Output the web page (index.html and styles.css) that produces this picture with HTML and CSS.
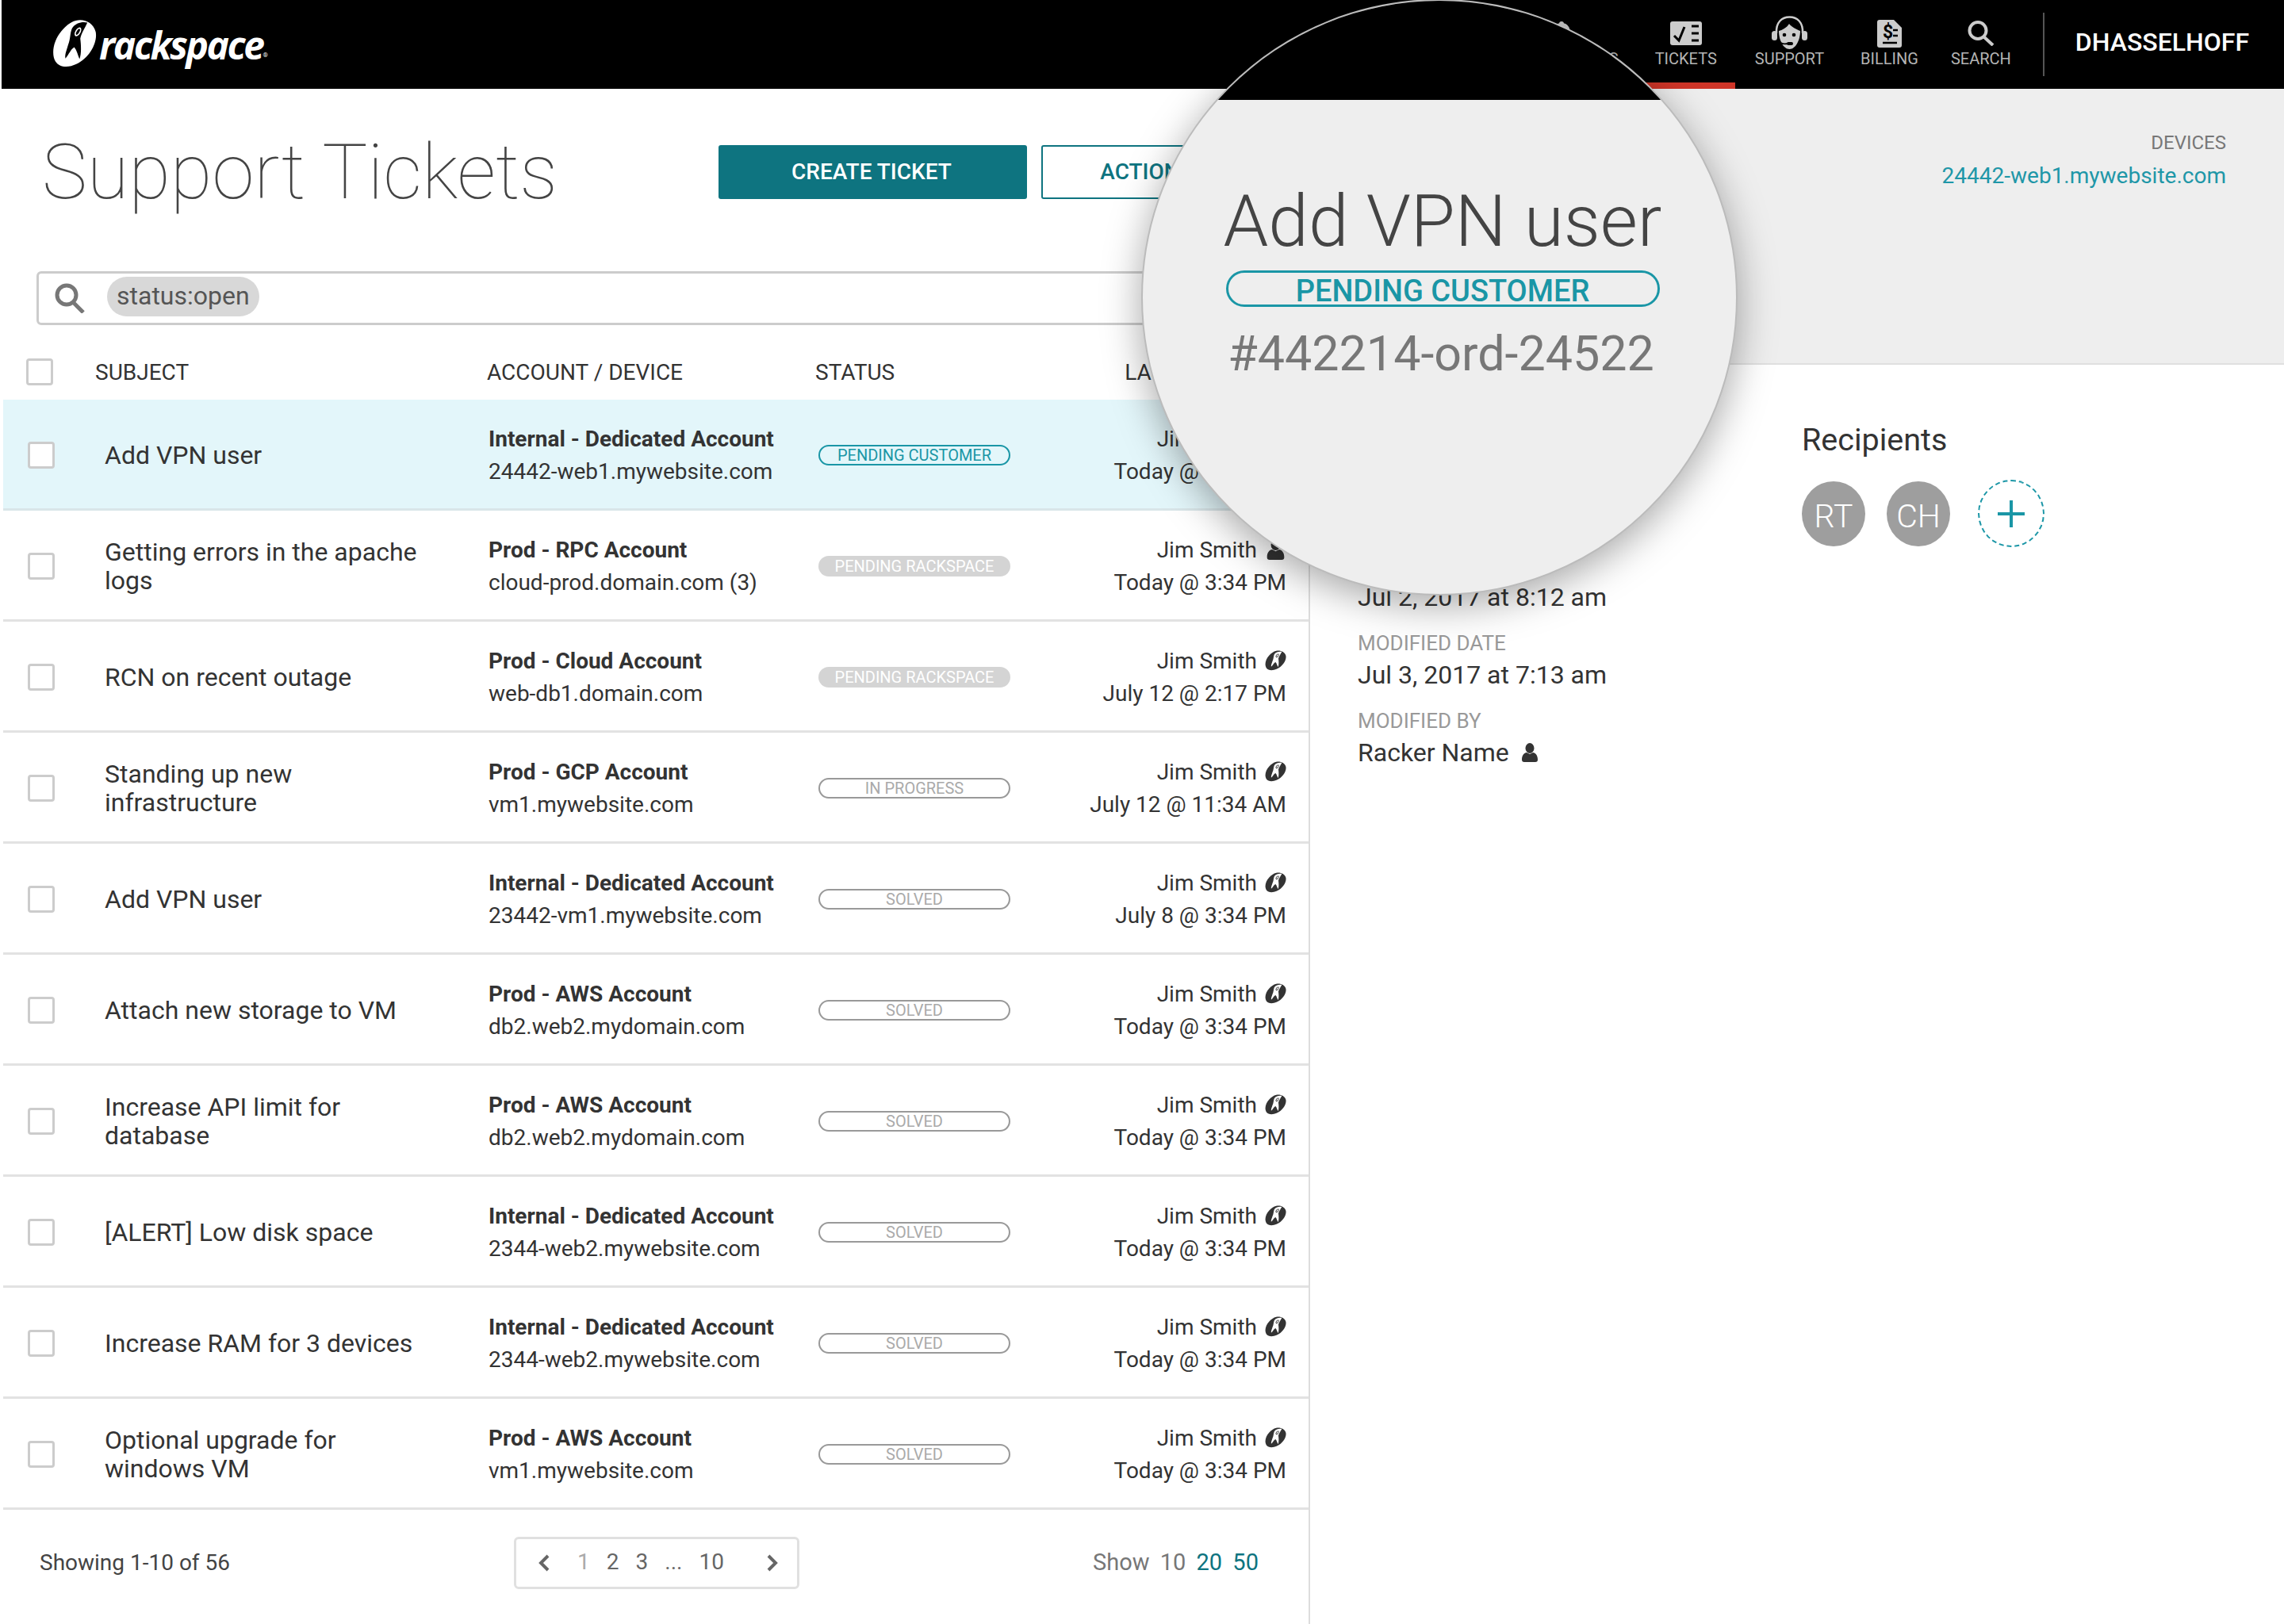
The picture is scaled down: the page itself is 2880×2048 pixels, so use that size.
FILE: index.html
```html
<!DOCTYPE html>
<html lang="en">

<head>
    <meta charset="UTF-8">
    <title>Support Tickets</title>
    <link rel="stylesheet" href="styles.css">
</head>

<body>
    <svg class="sprite" width="0" height="0">
        <symbol id="rack" viewBox="48 38 170 192" preserveAspectRatio="none">
            <path d="M138 44 C170 36 205 52 214 88 C222 130 190 190 140 214 C112 228 76 230 60 204 C42 172 54 120 82 86 C98 66 116 50 138 44Z" />
            <path class="cut" d="M182 52 C165 47 136 52 123 75 C115 95 118 115 108 140 C103 160 95 175 98 192 C112 176 118 156 132 148 C142 160 145 178 152 194 C160 175 158 140 155 115 C158 95 172 75 182 52Z" />
            <ellipse cx="146" cy="88" rx="10" ry="19" transform="rotate(30 146 88)" />
            <ellipse class="cut" cx="146" cy="88" rx="5" ry="13" transform="rotate(30 146 88)" />
        </symbol>
        <symbol id="person" viewBox="0 0 20 24">
            <ellipse cx="10" cy="6.5" rx="5.5" ry="6.5" />
            <path d="M0 21 C0 15 3 12.5 6 12 L10 14 L14 12 C17 12.5 20 15 20 21 C20 23 19 24 17 24 L3 24 C1 24 0 23 0 21Z" />
        </symbol>
    </svg>

    <header class="topbar">
        <a class="logo">
            <svg class="logo-mark" width="56" height="62"><use href="#rack" /></svg>
            <span class="logo-text">rackspace</span><span class="logo-reg">®</span>
        </a>
        <nav class="nav">
            <a class="nav-item">
                <div class="nav-icon">
                    <svg width="34" height="36" viewBox="0 0 34 36"><circle cx="17" cy="6" r="3" /><path d="M17 5 C25 5 28 11 28 18 L28 26 L32 30 L2 30 L6 26 L6 18 C6 11 9 5 17 5Z" /></svg>
                </div>
                <span>NOTIFICATIONS</span>
            </a>
            <a class="nav-item is-active">
                <div class="nav-icon">
                    <svg width="40" height="30" viewBox="0 0 40 30">
                        <rect width="40" height="30" rx="3" fill="#ccc" />
                        <path d="M5 18 L11 24 L18 7" fill="none" stroke="#000" stroke-width="3" />
                        <path d="M27 6 H36 M27 15 H36 M27 24 H36" stroke="#000" stroke-width="3" />
                    </svg>
                </div>
                <span>TICKETS</span>
            </a>
            <a class="nav-item">
                <div class="nav-icon">
                    <svg width="45" height="44" viewBox="0 0 45 44">
                        <path d="M6 22 C5 8 13 1.500 22.500 1.500 C32 1.500 40 8 39 22" fill="none" stroke="#ccc" stroke-width="2.500" />
                        <rect x="0" y="19" width="7" height="12" rx="3.500" fill="#ccc" />
                        <rect x="38" y="19" width="7" height="12" rx="3.500" fill="#ccc" />
                        <path d="M9 19 C13 18 19 15 22 10 C25 14 31 17 36 19 C36 31 30 42 22.500 42 C15 42 9 31 9 19Z" fill="#ccc" />
                        <circle cx="16" cy="24" r="2.300" fill="#000" />
                        <circle cx="28" cy="24" r="2.300" fill="#000" />
                        <path d="M9 31 C11 35 15 36 20 35" fill="none" stroke="#000" stroke-width="1.800" />
                        <rect x="19" y="33" width="8" height="4" rx="2" fill="#000" />
                    </svg>
                </div>
                <span>SUPPORT</span>
            </a>
            <a class="nav-item">
                <div class="nav-icon">
                    <svg width="31" height="35" viewBox="0 0 31 35">
                        <path d="M3 0 H21 L31 10 V32 C31 34 30 35 28 35 H3 C1 35 0 34 0 32 V3 C0 1 1 0 3 0Z" fill="#ccc" />
                        <text x="7" y="23" class="bill-sign">$</text>
                        <path d="M20 13 H26 M20 20 H26 M7 29 H25" stroke="#000" stroke-width="2.500" />
                    </svg>
                </div>
                <span>BILLING</span>
            </a>
            <a class="nav-item nav-search">
                <div class="nav-icon">
                    <svg width="34" height="32" viewBox="0 0 34 32">
                        <circle cx="13" cy="12.500" r="10.500" fill="none" stroke="#ccc" stroke-width="4" />
                        <path d="M20 20 L32 31" stroke="#ccc" stroke-width="4" />
                    </svg>
                </div>
                <span>SEARCH</span>
            </a>
        </nav>
        <div class="user">DHASSELHOFF</div>
    </header>

    <main class="page">
        <section class="tickets">
            <div class="title-row">
                <h1 class="title">Support Tickets</h1>
                <button class="btn btn-primary">CREATE TICKET</button>
                <button class="btn btn-outline">ACTIONS</button>
            </div>

            <div class="search">
                <svg width="38" height="38" viewBox="0 0 38 38">
                    <circle cx="15" cy="15" r="12" fill="none" stroke="#777" stroke-width="5" />
                    <path d="M23 24 L36 37" stroke="#777" stroke-width="5" />
                </svg>
                <span class="chip">status:open</span>
            </div>

            <div class="thead">
                <span class="check"></span>
                <span>SUBJECT</span>
                <span>ACCOUNT / DEVICE</span>
                <span>STATUS</span>
                <span class="thead-last">LAST UPDATED</span>
            </div>

            <div class="row is-selected">
                <span class="check"></span>
                <div class="subject">Add VPN user</div>
                <div class="account"><b>Internal - Dedicated Account</b><span>24442-web1.mywebsite.com</span></div>
                <div><span class="badge badge-customer">PENDING CUSTOMER</span></div>
                <div class="updated">
                    <div class="who">Jim Smith <svg class="who-icon"><use href="#rack" /></svg></div>
                    <div>Today @ 3:34 PM</div>
                </div>
            </div>
            <div class="row">
                <span class="check"></span>
                <div class="subject">Getting errors in the apache logs</div>
                <div class="account"><b>Prod - RPC Account</b><span>cloud-prod.domain.com (3)</span></div>
                <div><span class="badge badge-rackspace">PENDING RACKSPACE</span></div>
                <div class="updated">
                    <div class="who">Jim Smith <svg class="who-icon"><use href="#person" /></svg></div>
                    <div>Today @ 3:34 PM</div>
                </div>
            </div>
            <div class="row">
                <span class="check"></span>
                <div class="subject">RCN on recent outage</div>
                <div class="account"><b>Prod - Cloud Account</b><span>web-db1.domain.com</span></div>
                <div><span class="badge badge-rackspace">PENDING RACKSPACE</span></div>
                <div class="updated">
                    <div class="who">Jim Smith <svg class="who-icon"><use href="#rack" /></svg></div>
                    <div>July 12 @ 2:17 PM</div>
                </div>
            </div>
            <div class="row">
                <span class="check"></span>
                <div class="subject">Standing up new infrastructure</div>
                <div class="account"><b>Prod - GCP Account</b><span>vm1.mywebsite.com</span></div>
                <div><span class="badge">IN PROGRESS</span></div>
                <div class="updated">
                    <div class="who">Jim Smith <svg class="who-icon"><use href="#rack" /></svg></div>
                    <div>July 12 @ 11:34 AM</div>
                </div>
            </div>
            <div class="row">
                <span class="check"></span>
                <div class="subject">Add VPN user</div>
                <div class="account"><b>Internal - Dedicated Account</b><span>23442-vm1.mywebsite.com</span></div>
                <div><span class="badge">SOLVED</span></div>
                <div class="updated">
                    <div class="who">Jim Smith <svg class="who-icon"><use href="#rack" /></svg></div>
                    <div>July 8 @ 3:34 PM</div>
                </div>
            </div>
            <div class="row">
                <span class="check"></span>
                <div class="subject">Attach new storage to VM</div>
                <div class="account"><b>Prod - AWS Account</b><span>db2.web2.mydomain.com</span></div>
                <div><span class="badge">SOLVED</span></div>
                <div class="updated">
                    <div class="who">Jim Smith <svg class="who-icon"><use href="#rack" /></svg></div>
                    <div>Today @ 3:34 PM</div>
                </div>
            </div>
            <div class="row">
                <span class="check"></span>
                <div class="subject">Increase API limit for database</div>
                <div class="account"><b>Prod - AWS Account</b><span>db2.web2.mydomain.com</span></div>
                <div><span class="badge">SOLVED</span></div>
                <div class="updated">
                    <div class="who">Jim Smith <svg class="who-icon"><use href="#rack" /></svg></div>
                    <div>Today @ 3:34 PM</div>
                </div>
            </div>
            <div class="row">
                <span class="check"></span>
                <div class="subject">[ALERT] Low disk space</div>
                <div class="account"><b>Internal - Dedicated Account</b><span>2344-web2.mywebsite.com</span></div>
                <div><span class="badge">SOLVED</span></div>
                <div class="updated">
                    <div class="who">Jim Smith <svg class="who-icon"><use href="#rack" /></svg></div>
                    <div>Today @ 3:34 PM</div>
                </div>
            </div>
            <div class="row">
                <span class="check"></span>
                <div class="subject">Increase RAM for 3 devices</div>
                <div class="account"><b>Internal - Dedicated Account</b><span>2344-web2.mywebsite.com</span></div>
                <div><span class="badge">SOLVED</span></div>
                <div class="updated">
                    <div class="who">Jim Smith <svg class="who-icon"><use href="#rack" /></svg></div>
                    <div>Today @ 3:34 PM</div>
                </div>
            </div>
            <div class="row">
                <span class="check"></span>
                <div class="subject">Optional upgrade for windows VM</div>
                <div class="account"><b>Prod - AWS Account</b><span>vm1.mywebsite.com</span></div>
                <div><span class="badge">SOLVED</span></div>
                <div class="updated">
                    <div class="who">Jim Smith <svg class="who-icon"><use href="#rack" /></svg></div>
                    <div>Today @ 3:34 PM</div>
                </div>
            </div>

            <div class="foot">
                <div class="foot-count">Showing 1-10 of 56</div>
                <div class="pager">
                    <svg class="pager-prev" width="14" height="22" viewBox="0 0 14 22"><path d="M12 2 L3 11 L12 20" fill="none" stroke="#666" stroke-width="4" /></svg>
                    <span class="pager-off">1</span>
                    <span>2</span>
                    <span>3</span>
                    <span>...</span>
                    <span>10</span>
                    <svg class="pager-next" width="14" height="22" viewBox="0 0 14 22"><path d="M2 2 L11 11 L2 20" fill="none" stroke="#666" stroke-width="4" /></svg>
                </div>
                <div class="show">Show <span class="show-now">10</span> <a>20</a> <a>50</a></div>
            </div>
        </section>

        <section class="detail">
            <div class="detail-head">
                <div class="detail-label">DEVICES</div>
                <a class="detail-link">24442-web1.mywebsite.com</a>
            </div>
            <div class="detail-body">
                <div class="meta">
                    <div class="meta-item">
                        <div class="meta-label">CREATED DATE</div>
                        <div>Jul 2, 2017 at 8:12 am</div>
                    </div>
                    <div class="meta-item">
                        <div class="meta-label">MODIFIED DATE</div>
                        <div>Jul 3, 2017 at 7:13 am</div>
                    </div>
                    <div class="meta-item">
                        <div class="meta-label">MODIFIED BY</div>
                        <div class="meta-who">Racker Name <svg width="20" height="24"><use href="#person" /></svg></div>
                    </div>
                </div>
                <div class="recipients">
                    <h2 class="recipients-title">Recipients</h2>
                    <div class="avatars">
                        <span class="avatar">RT</span>
                        <span class="avatar">CH</span>
                        <span class="avatar-add">
                            <svg width="34" height="34" viewBox="0 0 34 34"><path d="M17 0 V34 M0 17 H34" stroke="#1a96a6" stroke-width="4" /></svg>
                        </span>
                    </div>
                </div>
            </div>
        </section>
    </main>

    <!-- lupa sobre la pagina -->
    <div class="lens">
        <div class="lens-top"></div>
        <div class="lens-body">
            <div class="lens-title">Add VPN user</div>
            <div class="lens-badge">PENDING CUSTOMER</div>
            <div class="lens-id">#442214-ord-24522</div>
        </div>
    </div>
</body>

</html>
```

FILE: styles.css
```css
* {
    box-sizing: border-box;
}

body {
    position: relative;
    width: 2880px;
    height: 2048px;
    margin: 0;
    padding-left: 2px;
    overflow: hidden;
    background: #fff;
    color: #333;
    font-family: Roboto, "Liberation Sans", sans-serif;
}

.sprite {
    position: absolute;
}

.cut {
    fill: var(--cut, #000);
}

/* Barra superior */
.topbar {
    display: flex;
    align-items: stretch;
    height: 112px;
    background: #000;
}

.logo {
    display: flex;
    align-items: center;
    padding-left: 64px;
    fill: #fff;
    color: #fff;
}

.logo-mark {
    margin-top: -2px;
}

.logo-text {
    margin-left: 3px;
    font-family: "Open Sans", sans-serif;
    font-size: 48px;
    font-weight: 700;
    font-style: italic;
    letter-spacing: -2.5px;
}

.logo-reg {
    margin-top: 26px;
    font-size: 8px;
}

.nav {
    display: flex;
    margin-left: auto;
    margin-right: 17px;
}

.nav-item {
    display: flex;
    flex-direction: column;
    align-items: center;
    height: 112px;
    padding: 20px 23px 0;
    color: #b4b4b4;
    fill: #ccc;
    font-size: 20px;
    line-height: 24px;
}

.nav-search {
    padding-left: 18px;
}

.nav-icon {
    display: flex;
    align-items: center;
    height: 44px;
    margin-bottom: -2px;
}

.is-active {
    margin-right: 2px;
    border-bottom: 8px solid #cf3528;
}

.bill-sign {
    fill: #000;
    font-family: Roboto, sans-serif;
    font-size: 23px;
    font-weight: 700;
}

.user {
    align-self: center;
    height: 80px;
    padding: 0 44px 0 39px;
    border-left: 2px solid #555;
    color: #fff;
    font-size: 32px;
    font-weight: 500;
    line-height: 74px;
}

/* Contenido */
.page {
    display: flex;
    height: 1936px;
}

.tickets {
    flex: 0 0 1650px;
    border-right: 2px solid #ddd;
}

.title-row {
    display: flex;
    align-items: center;
    gap: 18px;
    padding: 49px 0 0 51px;
}

.title {
    flex: 0 0 835px;
    margin: 0;
    color: #444;
    font-size: 96px;
    font-weight: 100;
    line-height: 112px;
}

.btn {
    height: 68px;
    padding: 0 0 2px;
    border-radius: 3px;
    font-family: inherit;
    font-size: 28px;
    font-weight: 500;
}

.btn-primary {
    width: 389px;
    padding-right: 3px;
    border: 0;
    background: #0e7480;
    color: #fff;
}

.btn-outline {
    width: 266px;
    border: 2px solid #0e7480;
    background: #fff;
    color: #0e7480;
}

.search {
    display: flex;
    align-items: center;
    gap: 28px;
    width: 1500px;
    height: 68px;
    margin: 69px 0 0 44px;
    padding-left: 20px;
    border: 3px solid #ccc;
    border-radius: 6px;
}

.chip {
    height: 50px;
    margin-top: -4px;
    padding: 0 12px;
    border-radius: 25px;
    background: #d8d8d8;
    color: #555;
    font-size: 32px;
    line-height: 48px;
}

.check {
    display: block;
    width: 34px;
    height: 34px;
    border: 3px solid #ccc;
    border-radius: 4px;
    background: #fff;
}

.thead {
    display: grid;
    grid-template-columns: 118px 494px 414px 260px 1fr;
    align-items: center;
    height: 70px;
    margin-top: 24px;
    padding-right: 28px;
    font-size: 28px;
}

.thead .check {
    margin-left: 31px;
}

.thead-last {
    margin-right: 9px;
    text-align: right;
}

.row {
    display: grid;
    grid-template-columns: 128px 484px 416px 260px 1fr;
    align-items: center;
    height: 140px;
    margin-left: 2px;
    padding: 2px 28px 0 0;
    border-bottom: 3px solid #e2e2e2;
}

.row .check {
    margin-left: 31px;
}

.is-selected {
    background: #e3f6fa;
    border-bottom-color: #d9e6e9;
}

.subject {
    width: 410px;
    font-size: 32px;
    line-height: 36px;
}

.account {
    display: flex;
    flex-direction: column;
    font-size: 28px;
    line-height: 41px;
}

.account b {
    font-weight: 700;
}

.badge {
    display: flex;
    align-items: center;
    justify-content: center;
    width: 242px;
    height: 26px;
    border: 2px solid #999;
    border-radius: 13px;
    color: #aaa;
    font-size: 20px;
}

.badge-customer {
    border-color: #1a96a6;
    color: #1a96a6;
}

.badge-rackspace {
    border: 0;
    background: #d4d4d4;
    color: #fff;
}

.updated {
    font-size: 28px;
    line-height: 41px;
    text-align: right;
}

.who {
    display: flex;
    justify-content: flex-end;
    align-items: center;
    gap: 10px;
    fill: #333;
    --cut: #fff;
}

.who-icon {
    width: 27px;
    height: 26px;
}

.foot {
    display: flex;
    align-items: center;
    height: 66px;
    margin-top: 34px;
    padding-left: 48px;
    color: #444;
    font-size: 28px;
}

.foot-count {
    flex: 0 0 598px;
    margin-top: -2px;
}

.pager {
    display: flex;
    align-items: center;
    gap: 21px;
    width: 360px;
    height: 66px;
    padding: 0 0 4px 28px;
    border: 3px solid #e0e0e0;
    border-radius: 6px;
    color: #666;
    font-size: 28px;
}

.pager svg {
    margin-top: 4px;
}

.pager-prev {
    margin-right: 14px;
}

.pager-next {
    margin-left: 33px;
}

.pager-off {
    color: #aaa;
}

.show {
    margin: -2px 0 0 370px;
    color: #777;
    font-size: 29px;
    word-spacing: 6px;
}

.show a {
    color: #0e7480;
}

/* Panel de detalle */
.detail {
    flex: 1;
}

.detail-head {
    display: flex;
    flex-direction: column;
    align-items: flex-end;
    height: 348px;
    padding: 54px 73px 0 0;
    border-bottom: 2px solid #e0e0e0;
    background: #eee;
}

.detail-label {
    color: #777;
    font-size: 24px;
    line-height: 28px;
}

.detail-link {
    margin-top: 8px;
    color: #1f97a8;
    font-size: 28px;
    line-height: 40px;
}

.detail-body {
    display: flex;
}

.meta {
    flex: 0 0 620px;
    padding: 237px 0 0 60px;
    font-size: 32px;
    line-height: 44px;
}

.meta-item {
    margin-bottom: 20px;
}

.meta-label {
    color: #999;
    font-size: 26px;
    line-height: 32px;
}

.meta-label + div {
    margin-top: 2px;
}

.meta-who {
    display: flex;
    align-items: center;
    gap: 16px;
    fill: #333;
}

.recipients {
    padding-top: 72px;
}

.recipients-title {
    margin: 0;
    font-size: 39.5px;
    font-weight: 400;
    line-height: 46px;
}

.avatars {
    display: flex;
    align-items: center;
    gap: 27px;
    margin-top: 27px;
}

.avatar {
    width: 80px;
    height: 82px;
    border-radius: 50%;
    background: #9e9e9e;
    color: #fff;
    font-size: 41px;
    font-weight: 300;
    line-height: 88px;
    text-align: center;
}

.avatar-add {
    display: flex;
    align-items: center;
    justify-content: center;
    width: 84px;
    height: 85px;
    margin-left: 8px;
    border: 2px dashed #1a96a6;
    border-radius: 50%;
}

/* Lupa */
.lens {
    position: absolute;
    top: -1px;
    left: 1439px;
    width: 752px;
    height: 752px;
    overflow: hidden;
    border: 2px solid #bbb;
    border-radius: 50%;
    background: #eee;
    box-shadow: 0 12px 50px rgba(0, 0, 0, .35);
}

.lens-top {
    height: 125px;
    background: #000;
}

.lens-body {
    display: flex;
    flex-direction: column;
    align-items: center;
    padding-left: 8px;
}

.lens-title {
    margin-top: 99px;
    color: #444;
    font-size: 91px;
    font-weight: 300;
    line-height: 108px;
}

.lens-badge {
    width: 547px;
    height: 46px;
    margin-top: 8px;
    border: 3px solid #1a96a6;
    border-radius: 23px;
    color: #1a96a6;
    font-size: 38px;
    font-weight: 500;
    line-height: 46px;
    text-align: center;
}

.lens-id {
    margin: 24px 4px 0 0;
    color: #777;
    font-size: 61px;
    line-height: 70px;
}
```
